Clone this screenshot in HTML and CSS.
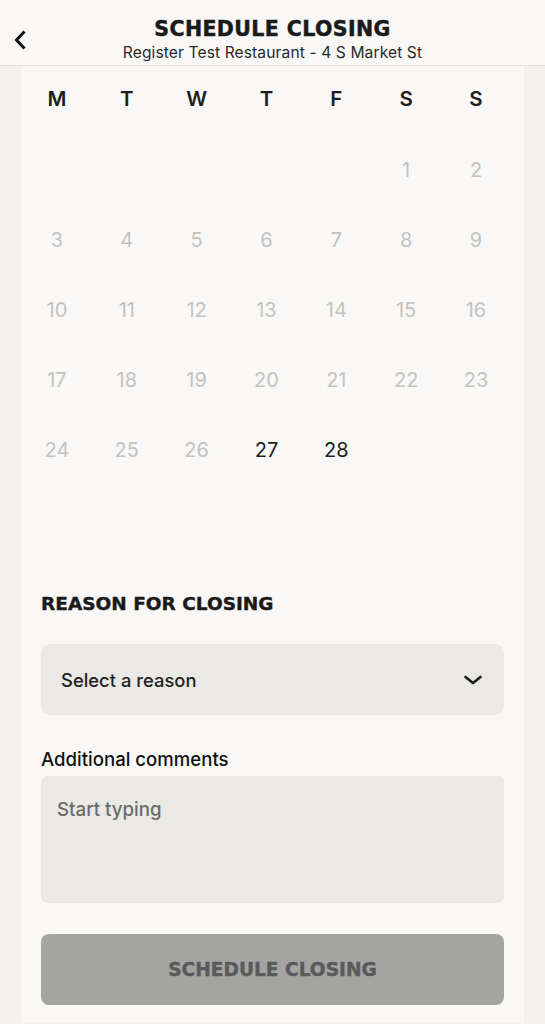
FILE: index.html
```html
<!DOCTYPE html>
<html>
<head>
<meta charset="utf-8">
<link rel="stylesheet" href="styles.css">
</head>
<body>
<header class="topbar">
  <button class="back" aria-label="Back">
    <svg width="12" height="20" viewBox="0 0 12 20"><path d="M9.5 2.5 L2.5 10 L9.5 17.5" fill="none" stroke="#111" stroke-width="3" stroke-linecap="square"/></svg>
  </button>
  <div class="titles">
    <h1 class="title">SCHEDULE CLOSING</h1>
    <div class="subtitle">Register Test Restaurant - 4 S Market St</div>
  </div>
</header>
<main class="panel">
  <div class="calendar">
    <div class="dow">M</div><div class="dow">T</div><div class="dow">W</div><div class="dow">T</div><div class="dow">F</div><div class="dow">S</div><div class="dow">S</div>
    <div class="day"></div><div class="day"></div><div class="day"></div><div class="day"></div><div class="day"></div><div class="day off">1</div><div class="day off">2</div>
    <div class="day off">3</div><div class="day off">4</div><div class="day off">5</div><div class="day off">6</div><div class="day off">7</div><div class="day off">8</div><div class="day off">9</div>
    <div class="day off">10</div><div class="day off">11</div><div class="day off">12</div><div class="day off">13</div><div class="day off">14</div><div class="day off">15</div><div class="day off">16</div>
    <div class="day off">17</div><div class="day off">18</div><div class="day off">19</div><div class="day off">20</div><div class="day off">21</div><div class="day off">22</div><div class="day off">23</div>
    <div class="day off">24</div><div class="day off">25</div><div class="day off">26</div><div class="day">27</div><div class="day">28</div><div class="day"></div><div class="day"></div>
  </div>
  <section class="form">
    <h2 class="section-title">REASON FOR CLOSING</h2>
    <div class="select">
      <span>Select a reason</span>
      <svg width="20" height="10" viewBox="0 0 20 10"><path d="M2.5 2 L10 8 L17.5 2" fill="none" stroke="#1a1a1a" stroke-width="2.6" stroke-linecap="round" stroke-linejoin="round"/></svg>
    </div>
    <label class="label">Additional comments</label>
    <div class="textarea">Start typing</div>
    <button class="submit">SCHEDULE CLOSING</button>
  </section>
</main>
</body>
</html>
```
FILE: styles.css
```css
* { box-sizing: border-box; }
html, body { margin: 0; padding: 0; }
body {
  background: #f2f1ed;
  font-family: Inter, "Liberation Sans", sans-serif;
  color: #1a1a1a;
  width: 545px;
  height: 1024px;
  overflow: hidden;
}
.topbar {
  height: 66px;
  background: #f9f8f6;
  border-bottom: 1px solid #e4e3df;
  display: flex;
  align-items: flex-start;
  justify-content: center;
  position: relative;
}
.back {
  position: absolute;
  left: 14px;
  top: 30px;
  border: 0;
  background: none;
  padding: 0;
  width: 12px;
  height: 20px;
}
.back svg { display: block; }
.titles {
  display: flex;
  flex-direction: column;
  align-items: center;
  padding-top: 16px;
}
.title {
  margin: 0;
  font-family: "DejaVu Sans", sans-serif;
  font-weight: 900;
  font-size: 20.5px;
  line-height: 26px;
  letter-spacing: 0.4px;
  -webkit-text-stroke: 0.5px #1a1a1a;
  color: #1a1a1a;
}
.subtitle {
  font-size: 15.6px;
  line-height: 22px;
  color: #2a2a2a;
  letter-spacing: 0.1px;
}
.panel {
  margin: 0 21px 0 21px;
  background: #f9f8f6;
  height: 957px;
}
.calendar {
  display: grid;
  grid-template-columns: repeat(7, 69.85px);
  grid-auto-rows: 70px;
  margin-left: 1px;
}
.dow {
  display: flex;
  align-items: center;
  justify-content: center;
  font-size: 20.5px;
  font-weight: 600;
  color: #1e1e1e;
  height: 64px;
}
.calendar .dow { grid-row: 1; }
.day {
  display: flex;
  align-items: center;
  justify-content: center;
  font-size: 20px;
  color: #1e1e1e;
  padding-bottom: 2px;
}
.day.off { color: #c3c3c1; }
.form {
  padding: 0 20px 0 20px;
  margin-top: 107px;
}
.section-title {
  margin: 0;
  font-family: "DejaVu Sans", sans-serif;
  font-weight: 900;
  font-size: 18.5px;
  line-height: 22px;
  -webkit-text-stroke: 0.4px #1a1a1a;
  color: #1a1a1a;
}
.select {
  margin-top: 29px;
  height: 71px;
  background: #eae9e5;
  border-radius: 9px;
  display: flex;
  align-items: center;
  justify-content: space-between;
  padding: 0 21px 0 20px;
  font-size: 18.4px;
  font-weight: 500;
  color: #1f1f1f;
}
.label {
  display: block;
  margin-top: 32px;
  font-size: 18.6px;
  font-weight: 500;
  line-height: 24px;
  color: #111;
}
.textarea {
  margin-top: 5px;
  height: 127px;
  background: #eae9e5;
  border-radius: 6px;
  padding: 22px 16px;
  font-size: 18.7px;
  font-weight: 500;
  color: #6b6b6b;
}
.submit {
  display: block;
  width: 100%;
  margin-top: 31px;
  height: 71px;
  border: 0;
  border-radius: 8px;
  background: #a4a4a3;
  color: #5a5a5a;
  font-family: "DejaVu Sans", sans-serif;
  font-weight: 900;
  font-size: 18.6px;
  -webkit-text-stroke: 0.4px #5a5a5a;
}
```
